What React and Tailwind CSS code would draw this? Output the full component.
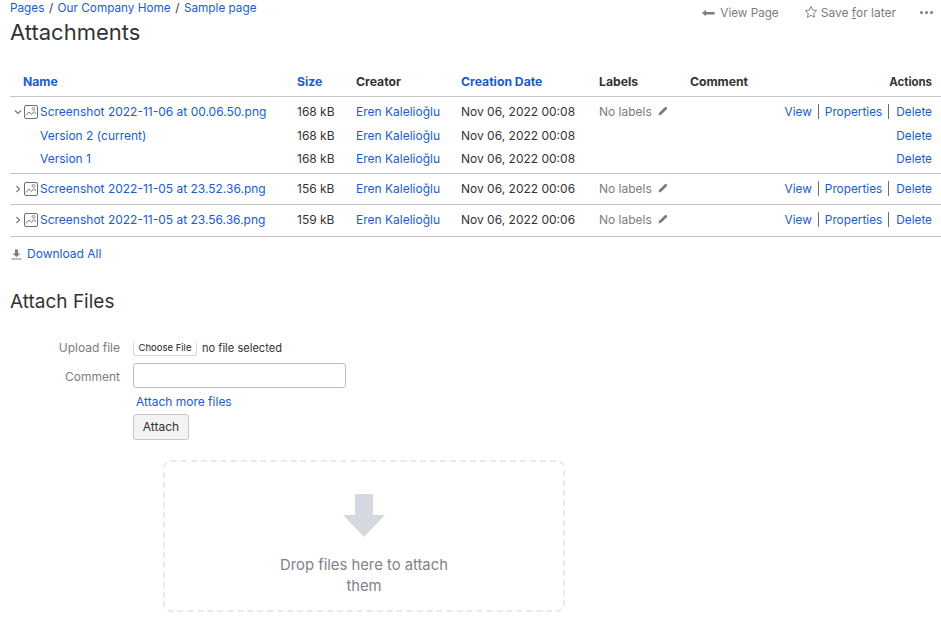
import React from "react";

const Img = () => (
  <svg width="14" height="14" viewBox="0 0 14 14" fill="none" className="shrink-0">
    <rect x="0.5" y="0.5" width="13" height="13" rx="1.5" stroke="#6b6f76" />
    <path d="M2 10.5 L5 7 L7.5 9.5 L10 6.5 L12 9" stroke="#7b7f86" strokeWidth="1" />
    <circle cx="9.5" cy="3.8" r="1.4" stroke="#7b7f86" strokeWidth="0.9" />
  </svg>
);
const Chev = ({ open }) => (
  <svg width="8" height="8" viewBox="0 0 8 8" fill="none" className="shrink-0">
    {open ? <path d="M1 2.5 L4 5.5 L7 2.5" stroke="#6f7277" strokeWidth="1.1" /> : <path d="M2.5 1 L5.5 4 L2.5 7" stroke="#6f7277" strokeWidth="1.1" />}
  </svg>
);
const Pencil = () => (
  <svg width="10" height="10" viewBox="0 0 10 10" className="ml-[6px] -mt-[1px] shrink-0">
    <path d="M0.5 9.5 L1.2 6.8 L6.8 1.2 Q7.6 0.5 8.4 1.2 L8.9 1.7 Q9.5 2.4 8.8 3.2 L3.2 8.8 Z" fill="#7a7d82" />
  </svg>
);
const A = ({ children, className = "" }) => <a className={"text-[#1a5ccf] " + className}>{children}</a>;

const cols = "grid grid-cols-[13px_274px_59px_105px_138px_91px_1fr_auto]";

const Actions = ({ only }) =>
  only ? (
    <div className="flex justify-end pr-[9px] text-[11.8px]"><A>Delete</A></div>
  ) : (
    <div className="flex justify-end pr-[9px] text-[11.8px]">
      <A>View</A>
      <span className="mx-[6px] w-px bg-[#6b6e73] h-[15px] self-center" />
      <A>Properties</A>
      <span className="ml-[6px] mr-[7px] w-px bg-[#6b6e73] h-[15px] self-center" />
      <A>Delete</A>
    </div>
  );

const Row = ({ open, name, size, date, labels = true, version, actionsOnly }) => (
  <div className={cols + " items-center h-[23px]" + (version ? "" : " pb-[2px]")}>
    <div />
    <div className="flex items-center -ml-[9px]">
      {version ? (
        <A className="ml-[26px]">{name}</A>
      ) : (
        <>
          <span className="w-[10px] flex"><Chev open={open} /></span>
          <Img />
          <A className="ml-[2px]">{name}</A>
        </>
      )}
    </div>
    <div className="text-[#333]">{size}</div>
    <A>Eren Kalelioğlu</A>
    <div className="text-[#333]">{date}</div>
    <div className="flex items-center text-[#7a7d82]">{labels && <>No labels<Pencil /></>}</div>
    <div />
    <Actions only={actionsOnly} />
  </div>
);

export default function App() {
  return (
    <div className="w-[941px] h-[619px] overflow-hidden bg-white pl-[10px] text-[12px] leading-[16px] text-[#333] [font-family:Inter,sans-serif]">
      <div className="flex justify-between h-[15px]">
        <div className="flex gap-[4.5px] text-[11.75px]">
          <A>Pages</A><span>/</span><A>Our Company Home</A><span>/</span><A>Sample page</A>
        </div>
        <div className="flex items-center text-[#7a7d82] mt-[5px] h-[16px]">
          <svg width="13" height="8" viewBox="0 0 13 8" className="mr-[5px]"><path d="M0 4 L4 0.8 V3 H12.5 V5.5 H4 V7.2 Z" fill="#7a7d82" /></svg>
          <span className="text-[11.7px]">View Page</span>
          <svg width="14" height="14" viewBox="0 0 24 24" fill="none" stroke="#7a7d82" strokeWidth="1.6" className="ml-[25px] mr-[3px] -mt-[3px]"><path d="M12 2.5l2.9 6.3 6.9.8-5.1 4.7 1.4 6.8-6.1-3.4-6.1 3.4 1.4-6.8-5.1-4.7 6.9-.8z" /></svg>
          <span>Save <u>f</u>or later</span>
          <span className="ml-[24px] mr-[8px] flex gap-[2px] -mt-[2px]">
            <i className="w-[3px] h-[3px] rounded-full bg-[#7a7d82]" /><i className="w-[3px] h-[3px] rounded-full bg-[#7a7d82]" /><i className="w-[3px] h-[3px] rounded-full bg-[#7a7d82]" />
          </span>
        </div>
      </div>
      <h1 className="text-[22px] leading-[28px] font-normal text-[#333] mt-[3px]">Attachments</h1>

      <div className={cols + " items-end h-[36px] mt-[15px] border-b border-[#c4c4c4] font-bold text-[12.2px] pb-[6px]"}>
        <div />
        <A>Name</A>
        <A>Size</A>
        <div>Creator</div>
        <A>Creation Date</A>
        <div>Labels</div>
        <div className="col-span-2 flex justify-between pr-[9px]"><span>Comment</span><span className="text-[11.4px]">Actions</span></div>
      </div>

      <div className="border-b border-[#c4c4c4] pt-[4px] pb-[3px]">
        <Row open name="Screenshot 2022-11-06 at 00.06.50.png" size="168 kB" date="Nov 06, 2022 00:08" />
        <Row version name="Version 2 (current)" size="168 kB" date="Nov 06, 2022 00:08" labels={false} actionsOnly />
        <Row version name="Version 1" size="168 kB" date="Nov 06, 2022 00:08" labels={false} actionsOnly />
      </div>
      <div className="border-b border-[#c4c4c4] pt-[4px] pb-[3px]">
        <Row name="Screenshot 2022-11-05 at 23.52.36.png" size="156 kB" date="Nov 06, 2022 00:06" />
      </div>
      <div className="border-b border-[#c4c4c4] pt-[4px] pb-[4px]">
        <Row name="Screenshot 2022-11-05 at 23.56.36.png" size="159 kB" date="Nov 06, 2022 00:06" />
      </div>

      <div className="flex items-center mt-[9px] h-[16px]">
        <svg width="11" height="11" viewBox="0 0 11 11" className="mr-[5px] ml-[1px]"><path d="M4 0.5H7V4.5H9.5L5.5 8L1.5 4.5H4Z M0.5 9.5H10.5V10.5H0.5Z" fill="#7a7d82" /></svg>
        <A>Download All</A>
      </div>

      <h2 className="text-[19px] leading-[24px] font-normal mt-[28px]">Attach Files</h2>

      <div className="mt-[25px] grid grid-cols-[110px_auto] justify-start gap-x-[13px]">
        <div className="text-right text-[#7a7d82] h-[18px] flex items-center justify-end">Upload file</div>
        <div className="flex items-center h-[18px] text-[11.1px]">
          <button className="h-[15px] w-[64px] bg-white rounded-[3px] border-b border-x border-[#d8d8d8] text-[9.5px] leading-[14px] text-[#222]">Choose File</button>
          <span className="ml-[5px] text-[#333]">no file selected</span>
        </div>
        <div className="text-right text-[#7a7d82] mt-[6px] pt-[2px] h-[25px] flex items-center justify-end">Comment</div>
        <input aria-label="Comment" className="mt-[6px] w-[213px] h-[25px] rounded-[3px] border border-[#bcc0c5] bg-white" />
        <div />
        <A className="mt-[6px] ml-[3px] block h-[16px]">Attach more files</A>
        <div />
        <button className="mt-[4px] w-[56px] h-[26px] rounded-[3px] border border-[#c4c7cb] bg-[#f2f3f3] text-[#333] text-[12px]">Attach</button>
      </div>

      <div className="ml-[153px] mt-[20px] w-[402px] h-[152px] rounded-[8px] border-2 border-dashed border-[#e8eaee] flex flex-col items-center">
        <svg width="42" height="43" viewBox="0 0 42 43" className="mt-[32px]"><path d="M12 0H30V21H42L21 43L0 21H12Z" fill="#d5d8df" /></svg>
        <div className="mt-[18px] text-[14.8px] leading-[21px] text-[#808389] text-center w-[200px]">Drop files here to attach them</div>
      </div>
    </div>
  );
}
